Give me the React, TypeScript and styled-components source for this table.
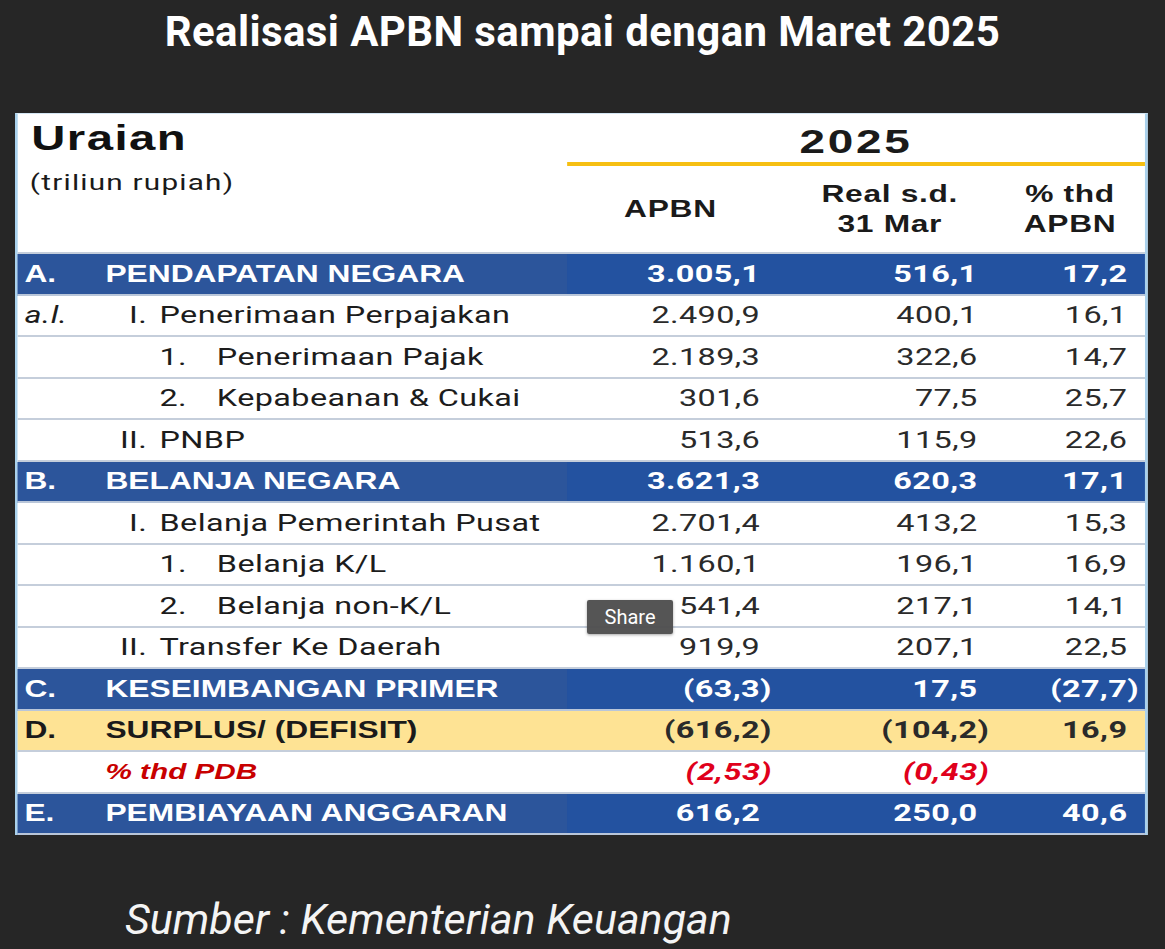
import React from "react";
import styled, { createGlobalStyle } from "styled-components";

// the source chart is a horizontally stretched picture, so the sheet is laid
// out narrow and widened once with scaleX
const STRETCH = 1.35;
const COLS = "407px 167px 156px 105px";

type Tone = "blue" | "white" | "yellow" | "pdb";

interface Line {
	tone: Tone;
	code?: string;
	roman?: string;
	num?: string;
	label: string;
	values: [string, string, string];
}

const rows: Line[] = [
	{ tone: "blue", code: "A.", label: "PENDAPATAN NEGARA", values: ["3.005,1", "516,1", "17,2"] },
	{ tone: "white", code: "a.l.", roman: "I.", label: "Penerimaan Perpajakan", values: ["2.490,9", "400,1", "16,1"] },
	{ tone: "white", num: "1.", label: "Penerimaan Pajak", values: ["2.189,3", "322,6", "14,7"] },
	{ tone: "white", num: "2.", label: "Kepabeanan & Cukai", values: ["301,6", "77,5", "25,7"] },
	{ tone: "white", roman: "II.", label: "PNBP", values: ["513,6", "115,9", "22,6"] },
	{ tone: "blue", code: "B.", label: "BELANJA NEGARA", values: ["3.621,3", "620,3", "17,1"] },
	{ tone: "white", roman: "I.", label: "Belanja Pemerintah Pusat", values: ["2.701,4", "413,2", "15,3"] },
	{ tone: "white", num: "1.", label: "Belanja K/L", values: ["1.160,1", "196,1", "16,9"] },
	{ tone: "white", num: "2.", label: "Belanja non-K/L", values: ["541,4", "217,1", "14,1"] },
	{ tone: "white", roman: "II.", label: "Transfer Ke Daerah", values: ["919,9", "207,1", "22,5"] },
	{ tone: "blue", code: "C.", label: "KESEIMBANGAN PRIMER", values: ["(63,3)", "17,5", "(27,7)"] },
	{ tone: "yellow", code: "D.", label: "SURPLUS/ (DEFISIT)", values: ["(616,2)", "(104,2)", "16,9"] },
	{ tone: "pdb", code: "", label: "% thd PDB", values: ["(2,53)", "(0,43)", ""] },
	{ tone: "blue", code: "E.", label: "PEMBIAYAAN ANGGARAN", values: ["616,2", "250,0", "40,6"] }
];

const colPad = [24, 19, 13];

const GlobalStyle = createGlobalStyle`
	html, body {
		margin: 0;
		padding: 0;
		background: #262626;
	}
	body {
		font-family: Roboto, "Liberation Sans", sans-serif;
	}
`;

const Page = styled.div`
	width: 1165px;
	height: 949px;
	background: #262626;
	overflow: hidden;
`;

const Title = styled.h1`
	margin: 0;
	height: 113px;
	padding-top: 10px;
	box-sizing: border-box;
	text-align: center;
	color: #fff;
	font: 700 42px/44px Roboto, sans-serif;
	letter-spacing: 0.4px;
`;

const Frame = styled.div`
	position: relative;
	margin-left: 15px;
	width: 1133px;
	height: 722px;
`;

const Sheet = styled.div`
	width: 839px;
	box-sizing: border-box;
	transform: scaleX(${STRETCH});
	transform-origin: left top;
	background: #fff;
	border-left: 2px solid #a9d1ec;
	border-right: 2px solid #a9d1ec;
	border-top: 1px solid #d4e6f3;
`;

const Head = styled.div`
	display: grid;
	grid-template-columns: ${COLS};
	height: 140px;
	box-sizing: border-box;
	border-bottom: 2px solid #c5cedb;
`;

const HeadLeft = styled.div`
	padding: 5px 0 0 9px;
	color: #111;
`;

const Uraian = styled.div`
	font: 700 35px/37px "Liberation Sans", Arial, sans-serif;
	letter-spacing: 1.1px;
	padding-left: 1px;
`;

const Unit = styled.div`
	margin-top: 14px;
	font: 400 22px/26px Roboto, sans-serif;
	letter-spacing: 0.9px;
	color: #1a1a1a;
`;

const HeadRight = styled.div`
	grid-column: 2 / 5;
	display: flex;
	flex-direction: column;
`;

const Year = styled.div`
	height: 48px;
	display: flex;
	align-items: center;
	justify-content: center;
	font: 700 34px/36px "Liberation Sans", Arial, sans-serif;
	letter-spacing: 2px;
	color: #1a1a1a;
	padding-top: 5px;
	box-sizing: border-box;
`;

const GoldBar = styled.div`
	height: 4px;
	background: #f6bf12;
`;

const ColHeads = styled.div`
	flex: 1;
	display: grid;
	grid-template-columns: 167px 156px 105px;
	align-items: center;
`;

const ColHead = styled.div<{ $shift: number }>`
	text-align: center;
	padding-right: ${p => p.$shift}px;
	font: 700 23.5px/30px "Liberation Sans", Arial, sans-serif;
	letter-spacing: 0.5px;
	color: #1a1a1a;
`;

const Row = styled.div<{ $tone: Tone }>`
	display: grid;
	grid-template-columns: ${COLS};
	height: 41.5px;
	box-sizing: border-box;
	border-bottom: 2px solid ${p => (p.$tone === "blue" ? "#b9c6d9" : "#c5cedb")};
	background: ${p => (p.$tone === "blue" ? "#2352a0" : p.$tone === "yellow" ? "#fee394" : "#fff")};
`;

const Label = styled.div<{ $tone: Tone }>`
	display: flex;
	align-items: center;
	padding-left: 5px;
	white-space: nowrap;
	background: ${p => (p.$tone === "blue" ? "#2c559b" : "transparent")};
	color: #1c1c1c;
	font: 400 24px/28px Roboto, sans-serif;
	letter-spacing: 0.3px;
`;

const Code = styled.span<{ $italic?: boolean }>`
	flex: none;
	width: 60px;
	font-style: ${p => (p.$italic ? "italic" : "normal")};
`;

const Roman = styled.span`
	flex: none;
	width: 31px;
	margin-right: 9px;
	text-align: right;
`;

const Num = styled.span`
	flex: none;
	width: 42.5px;
`;

const Heading = styled.span<{ $tone: Tone }>`
	display: flex;
	font: ${p => (p.$tone === "pdb" ? "italic 700 22px/28px" : "700 23.5px/28px")} "Liberation Sans", Arial, sans-serif;
	letter-spacing: 0;
	color: ${p => (p.$tone === "blue" ? "#fff" : p.$tone === "pdb" ? "#c80000" : "#1a1a1a")};
`;

const Value = styled.div<{ $tone: Tone; $pad: number }>`
	display: flex;
	align-items: center;
	justify-content: flex-end;
	padding-right: ${p => p.$pad}px;
	white-space: nowrap;
	font: ${p => (p.$tone === "white" ? "400" : p.$tone === "pdb" ? "italic 700" : "700")} 24px/28px Roboto, sans-serif;
	letter-spacing: 0.3px;
	color: ${p => (p.$tone === "blue" ? "#fff" : p.$tone === "pdb" ? "#e0001b" : "#2a2a2a")};
`;

const Hang = styled.span`
	margin-right: -0.36em;
`;

const Tooltip = styled.div`
	position: absolute;
	left: 572px;
	top: 487px;
	width: 86px;
	height: 34px;
	display: flex;
	align-items: center;
	justify-content: center;
	background: rgba(78, 78, 78, 0.96);
	border-radius: 2px;
	box-shadow: 0 1px 3px rgba(0, 0, 0, 0.35);
	color: #fff;
	font: 400 20px/24px Roboto, sans-serif;
`;

const Source = styled.div`
	margin-top: 59px;
	padding-left: 125px;
	color: #f4f4f4;
	font: italic 400 43px/50px Roboto, sans-serif;
	letter-spacing: 0;
`;

function LabelCell({ line }: { line: Line }) {
	if (line.tone !== "white") {
		return (
			<Label $tone={line.tone}>
				<Heading $tone={line.tone}>
					<Code>{line.code}</Code>
					{line.label}
				</Heading>
			</Label>
		);
	}
	return (
		<Label $tone={line.tone}>
			<Code $italic>{line.code}</Code>
			<Roman>{line.roman}</Roman>
			{line.num && <Num>{line.num}</Num>}
			<span>{line.label}</span>
		</Label>
	);
}

export default function App() {
	return (
		<Page>
			<GlobalStyle />
			<Title>Realisasi APBN sampai dengan Maret 2025</Title>
			<Frame>
				<Sheet>
					<Head>
						<HeadLeft>
							<Uraian>Uraian</Uraian>
							<Unit>(triliun rupiah)</Unit>
						</HeadLeft>
						<HeadRight>
							<Year>2025</Year>
							<GoldBar />
							<ColHeads>
								<ColHead $shift={14}>APBN</ColHead>
								<ColHead $shift={12}>
									Real s.d.
									<br />
									31 Mar
								</ColHead>
								<ColHead $shift={6}>
									% thd
									<br />
									APBN
								</ColHead>
							</ColHeads>
						</HeadRight>
					</Head>
					{rows.map(line => (
						<Row key={line.label} $tone={line.tone}>
							<LabelCell line={line} />
							{line.values.map((v, i) => (
								<Value key={i} $tone={line.tone} $pad={colPad[i]}>
									{v.endsWith(")") ? <Hang>{v}</Hang> : v}
								</Value>
							))}
						</Row>
					))}
				</Sheet>
				<Tooltip>Share</Tooltip>
			</Frame>
			<Source>Sumber : Kementerian Keuangan</Source>
		</Page>
	);
}
